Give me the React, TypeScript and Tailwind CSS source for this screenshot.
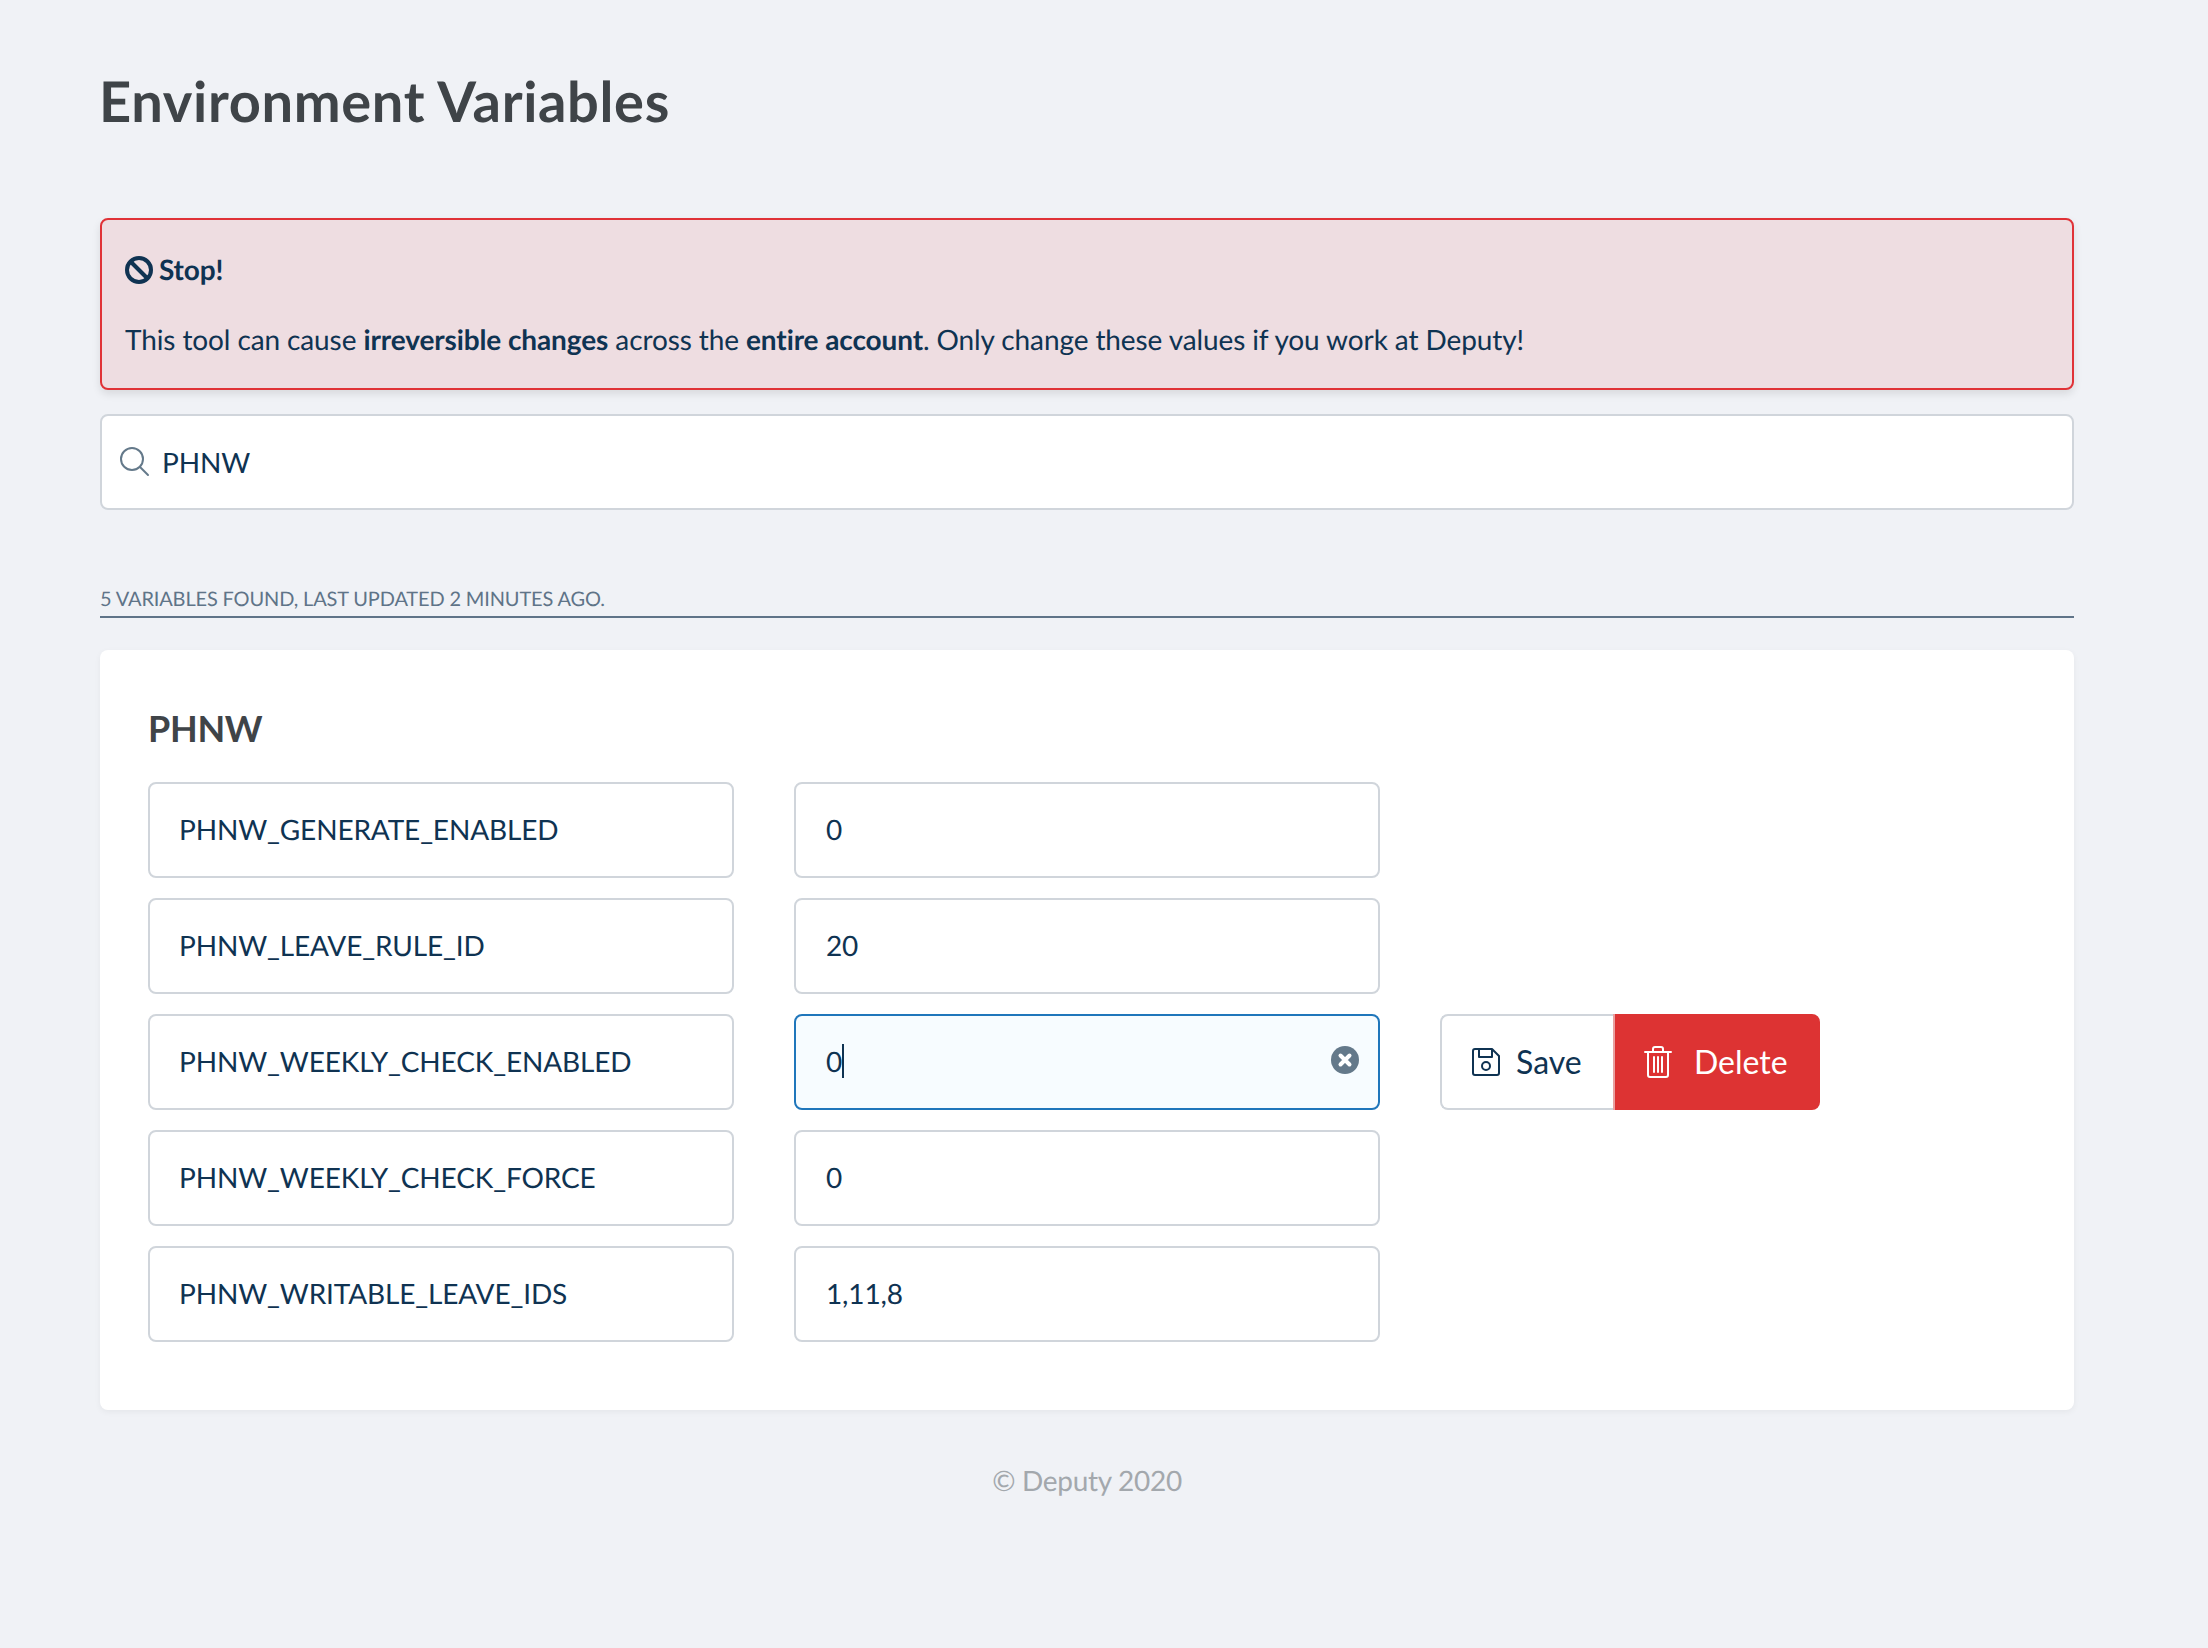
import React from 'react';

type Variable = { name: string; value: string; active?: boolean };

const variables: Variable[] = [
  { name: 'PHNW_GENERATE_ENABLED', value: '0' },
  { name: 'PHNW_LEAVE_RULE_ID', value: '20' },
  { name: 'PHNW_WEEKLY_CHECK_ENABLED', value: '0', active: true },
  { name: 'PHNW_WEEKLY_CHECK_FORCE', value: '0' },
  { name: 'PHNW_WRITABLE_LEAVE_IDS', value: '1,11,8' },
];

const Row: React.FC<{ item: Variable }> = ({ item }) => {
  return (
    <div className="flex items-center h-[96px]">
      <div className="flex items-center w-[586px] h-full pl-[29px] pr-[30px] pb-[2px] bg-white border-2 border-solid border-[#d0d5db] rounded-[8px]">
        {item.name}
      </div>
      {item.active ? (
        <div className="flex items-center justify-between w-[586px] h-full ml-[60px] pl-[30px] pr-[19px] pb-[2px] bg-[#f7fcff] border-2 border-solid border-[#1f76bb] rounded-[8px]">
          <div className="flex items-center">
            {item.value}
            <span className="w-[2px] h-[34px] bg-[#0f3352]"></span>
          </div>
          <svg width="28" height="28" viewBox="0 0 28 28" className="mb-[3px]">
            <circle cx="14" cy="14" r="14" fill="#64798a" />
            <path d="M9.5 9.5L18.5 18.5M18.5 9.5L9.5 18.5" stroke="#fff" strokeWidth="4" strokeLinecap="round" />
          </svg>
        </div>
      ) : (
        <div className="flex items-center w-[586px] h-full ml-[60px] px-[30px] pb-[2px] bg-white border-2 border-solid border-[#d0d5db] rounded-[8px]">
          {item.value}
        </div>
      )}
      {item.active && (
        <div className="flex h-full ml-[60px] text-[32px] tracking-normal">
          <button className="flex items-center gap-[16px] w-[173px] h-full pl-[30px] bg-white border-2 border-r-0 border-solid border-[#d0d5db] rounded-l-[8px] text-[#0f3352]">
            <svg width="28" height="28" viewBox="0 0 28 28" fill="none" stroke="currentColor" strokeWidth="2" strokeLinejoin="round">
              <path d="M3 1H20L27 8V25a2 2 0 0 1-2 2H3a2 2 0 0 1-2-2V3a2 2 0 0 1 2-2z" />
              <path d="M7 1V9H20V1" />
              <circle cx="14" cy="18" r="4" />
            </svg>
            Save
          </button>
          <button className="flex items-center gap-[22px] w-[207px] h-full pl-[29px] bg-[#dd3333] border-l-2 border-solid border-[#e9a0a0] rounded-r-[8px] text-white">
            <svg width="28" height="32" viewBox="0 0 28 32" fill="none" stroke="currentColor" strokeWidth="2" strokeLinecap="round">
              <path d="M1 6H27" />
              <path d="M9 6V3a2 2 0 0 1 2-2h6a2 2 0 0 1 2 2v3" />
              <path d="M4 6V29a2 2 0 0 0 2 2H22a2 2 0 0 0 2-2V6" />
              <path d="M10 11V26M14 11V26M18 11V26" />
            </svg>
            Delete
          </button>
        </div>
      )}
    </div>
  );
};

const App: React.FC = () => {
  return (
    <div className="w-[2208px] h-[1648px] bg-[#f0f2f6] pl-[100px] pr-[134px] pt-[62px] font-['Lato','Open_Sans',sans-serif] text-[28px] tracking-[-0.13px] text-[#0f3352] [text-rendering:geometricPrecision]">
      <h1 className="-ml-[1px] text-[56px] leading-[78px] tracking-[0.65px] font-bold text-[#3f4448] m-0">Environment Variables</h1>

      <div className="mt-[78px] h-[172px] px-[23px] pt-[29px] bg-[#eedde1] border-2 border-solid border-[#e03237] rounded-[8px] shadow-[0_4px_8px_rgba(0,0,0,0.1)]">
        <div className="flex items-center gap-[6px] font-bold leading-[40px]">
          <svg width="28" height="28" viewBox="0 0 28 28" fill="none" stroke="currentColor" strokeWidth="4" className="mt-[1px]">
            <circle cx="14" cy="14" r="12" />
            <path d="M5.5 5.5L22.5 22.5" />
          </svg>
          Stop!
        </div>
        <p className="mt-[30px] leading-[40px] tracking-[-0.105px]">
          This tool can cause <strong className="font-bold">irreversible changes</strong> across the{' '}
          <strong className="font-bold">entire account</strong>. Only change these values if you work at Deputy!
        </p>
      </div>

      <div className="flex items-center mt-[24px] h-[96px] pl-[18px] bg-white border-2 border-solid border-[#d0d5db] rounded-[8px]">
        <svg width="30" height="30" viewBox="0 0 30 30" fill="none" stroke="#64798a" strokeWidth="2" strokeLinecap="round">
          <circle cx="12" cy="12" r="11" />
          <path d="M20 20L28 28" />
        </svg>
        <span className="ml-[12px]">PHNW</span>
      </div>

      <div className="mt-[75px] h-[33px] border-b-2 border-solid border-[#5f7488] text-[20px] leading-[28px] tracking-[-0.15px] text-[#5f7488] uppercase">
        5 variables found, last updated 2 minutes ago.
      </div>

      <div className="mt-[32px] h-[760px] px-[48px] pt-[50px] bg-white rounded-[8px] shadow-[0_2px_6px_rgba(0,0,0,0.05)]">
        <h2 className="text-[36px] leading-[56px] tracking-[-0.3px] font-bold text-[#3f4448] m-0">PHNW</h2>
        <div className="flex flex-col gap-[20px] mt-[26px]">
          {variables.map((item) => (
            <Row key={item.name} item={item} />
          ))}
        </div>
      </div>

      <div className="mt-[50px] text-center leading-[40px] tracking-[-0.3px] text-[#a3a8ad]">© Deputy 2020</div>
    </div>
  );
};

export default App;
